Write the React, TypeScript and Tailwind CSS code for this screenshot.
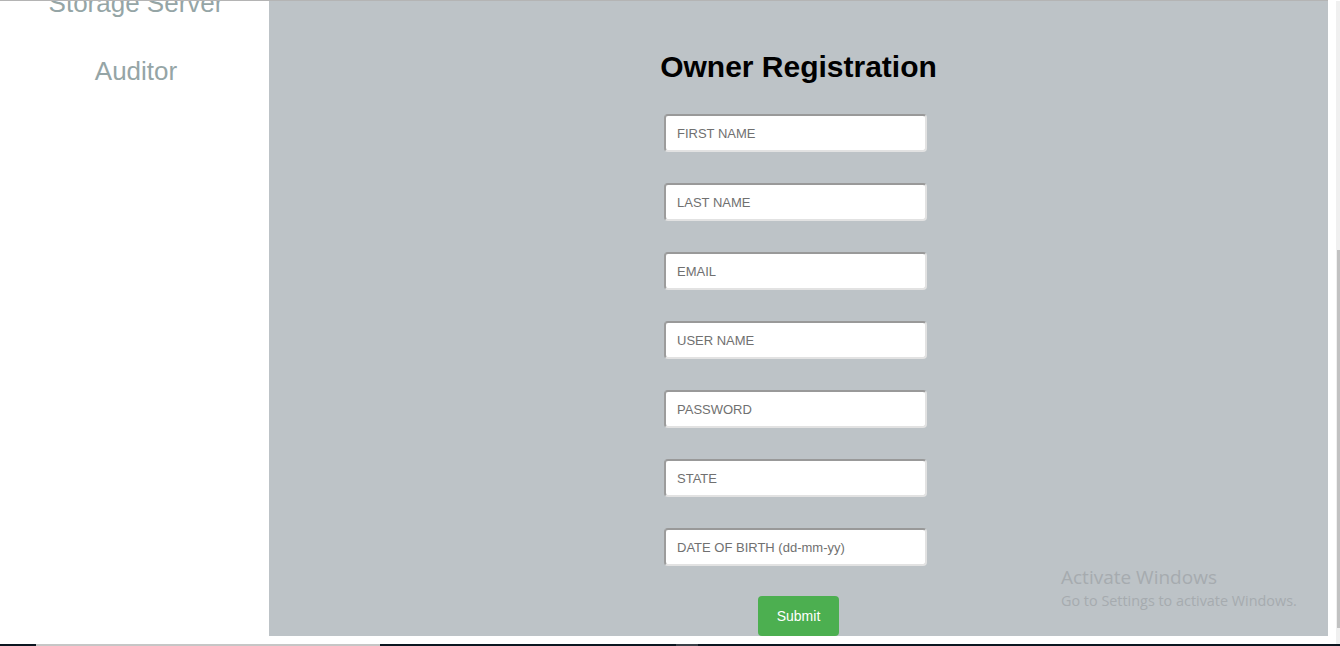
import React from 'react';

const fields = [
  'FIRST NAME',
  'LAST NAME',
  'EMAIL',
  'USER NAME',
  'PASSWORD',
  'STATE',
  'DATE OF BIRTH (dd-mm-yy)',
];

const menu = ['Storage Server', 'Auditor'];

export default function App() {
  return (
    <div className="relative flex h-[646px] w-[1340px] flex-col overflow-hidden bg-white font-['Liberation_Sans',Arial,sans-serif]">
      {/* top edge */}
      <div className="h-px w-[1328px] bg-[#b4b4b4]" />

      <div className="flex h-[643px]">
        {/* sidebar */}
        <aside className="w-[269px] shrink-0 overflow-hidden bg-white">
          <ul className="mt-[-13px] flex flex-col gap-[38px] pl-[3px]">
            {menu.map((m) => (
              <li key={m} className="h-[30px] text-center text-[26px] leading-[30px] text-[#95a5a6]">
                {m}
              </li>
            ))}
          </ul>
        </aside>

        {/* main panel */}
        <main className="h-[635px] w-[1059px] shrink-0 overflow-hidden bg-[#bdc3c7]">
          <form className="flex flex-col items-center pt-[49px]" onSubmit={(e) => e.preventDefault()}>
            <h1 className="text-[30px] font-bold leading-[34px] text-black">Owner Registration</h1>
            <div className="mt-[30px] flex flex-col gap-[31px]">
              {fields.map((f) => (
                <div key={f} className="w-[269px]">
                  <input
                    type="text"
                    placeholder={f}
                    className="h-[38px] w-[263px] rounded-[4px] border-2 border-t-[#999] border-l-[#9c9c9c] border-r-[#e2e2e2] border-b-[#e2e2e2] bg-white pl-[11px] text-[13px] text-[#555] placeholder:text-[#707070] focus:outline-none"
                  />
                </div>
              ))}
            </div>
            <button
              type="submit"
              className="mt-[30px] h-[40px] w-[81px] rounded-[4px] bg-[#4caf50] text-[14px] text-white"
            >
              Submit
            </button>
          </form>
        </main>

        {/* gutter + scrollbar */}
        <div className="w-[8px] shrink-0 bg-white" />
        <div className="flex w-[4px] shrink-0 flex-col bg-[#f0f0f0]">
          <div className="h-[249px]" />
          <div className="ml-[1px] h-[378px] w-[3px] bg-[#c1c1c1]" />
        </div>
      </div>

      {/* taskbar edge */}
      <div className="flex h-[2px]">
        <div className="w-[36px] bg-[#0b1620]" />
        <div className="w-[344px] bg-[#c6c6c6]" />
        <div className="w-[296px] bg-[#0b1620]" />
        <div className="w-[22px] bg-[#3a4048]" />
        <div className="flex-1 bg-[#0b1620]" />
      </div>

      {/* windows watermark */}
      <div className="pointer-events-none absolute left-[1061px] top-[564px] font-['Open_Sans','Noto_Sans',sans-serif] text-[#a6abaf]">
        <div className="text-[19px] leading-[27px]">Activate Windows</div>
        <div className="text-[14.4px] leading-[20px]">Go to Settings to activate Windows.</div>
      </div>
    </div>
  );
}
